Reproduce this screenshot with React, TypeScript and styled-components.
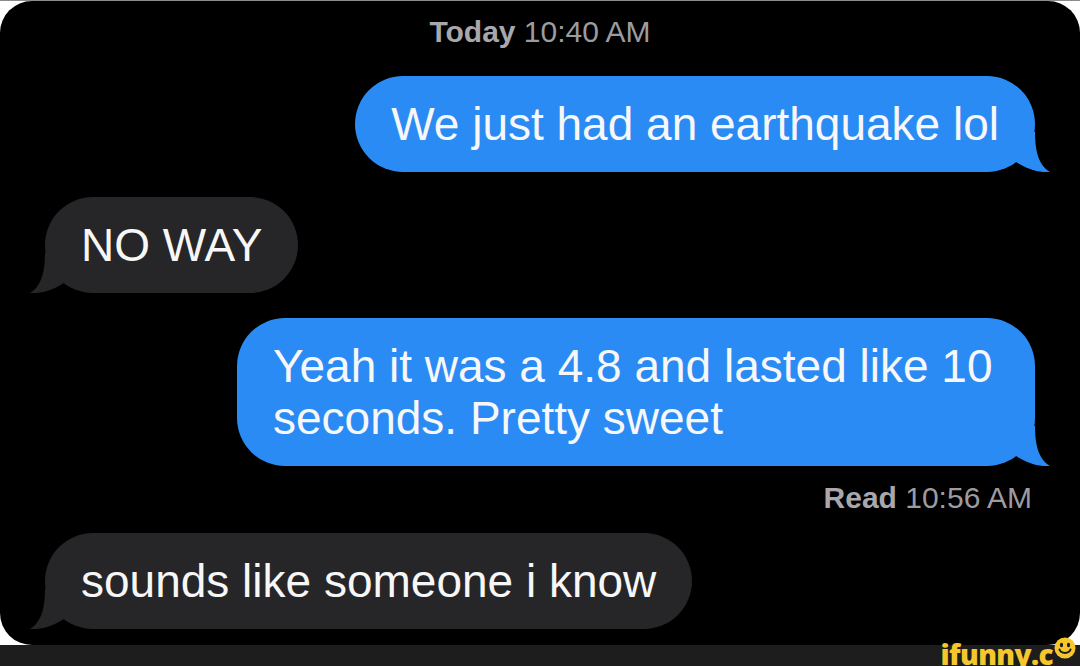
import React from "react";
import styled, { createGlobalStyle } from "styled-components";

const Global = createGlobalStyle`
  html, body {
    margin: 0;
    padding: 0;
    background: #ffffff;
    overflow: hidden;
    width: 1080px;
    height: 666px;
  }
  #root {
    width: 1080px;
    height: 666px;
  }
`;

const Page = styled.div`
  width: 1080px;
  height: 666px;
  display: flex;
  flex-direction: column;
  background: #ffffff;
  border-top: 1px solid #8c8c8c;
  box-sizing: border-box;
  font-family: "Liberation Sans", Arial, sans-serif;
`;

const Card = styled.div`
  height: 644px;
  background: #000000;
  border-radius: 32px;
  display: flex;
  flex-direction: column;
  padding: 0 45px;
  box-sizing: border-box;
`;

const Stamp = styled.div<{ $align: "center" | "right"; $mt: number }>`
  margin-top: ${(p) => p.$mt}px;
  text-align: ${(p) => p.$align};
  padding-right: ${(p) => (p.$align === "right" ? 3 : 0)}px;
  font-size: 30px;
  line-height: 34px;
  color: #9c9ca0;
  b {
    font-weight: 700;
    color: #a8a8ac;
  }
`;

const Row = styled.div<{ $out: boolean; $mt: number }>`
  display: flex;
  justify-content: ${(p) => (p.$out ? "flex-end" : "flex-start")};
  margin-top: ${(p) => p.$mt}px;
`;

const Bubble = styled.div<{ $out: boolean; $max?: number }>`
  position: relative;
  box-sizing: border-box;
  max-width: ${(p) => (p.$max ? `${p.$max}px` : "none")};
  padding: 22px 36px;
  border-radius: 48px;
  background: ${(p) => (p.$out ? "#2b8bf4" : "#262629")};
  color: #f7f7f7;
  font-size: 46px;
  line-height: 52px;
`;

const Tail = styled.svg<{ $out: boolean }>`
  position: absolute;
  bottom: 0;
  width: 36px;
  height: 40px;
  ${(p) =>
    p.$out
      ? "right: -16px;"
      : "left: -16px; transform: scaleX(-1);"}
`;

const Footer = styled.div`
  position: relative;
  flex: 1;
  background: #1d1d1d;
`;

const Logo = styled.div`
  position: absolute;
  right: 4px;
  bottom: -3px;
  display: flex;
  align-items: flex-start;
  font-family: "Open Sans", "Liberation Sans", sans-serif;
  font-weight: 800;
  font-size: 28px;
  line-height: 30px;
  letter-spacing: -0.6px;
  color: #f6c72d;
`;

const Smiley = styled.svg`
  width: 22px;
  height: 22px;
  margin-left: 1px;
  margin-top: -2px;
`;

function BubbleTail({ out }: { out: boolean }) {
  return (
    <Tail $out={out} viewBox="0 0 36 40">
      <path
        d="M0 0 H20 C20 22 25 34 35 40 C24 41 12 37 1 30 Z"
        fill={out ? "#2b8bf4" : "#262629"}
      />
    </Tail>
  );
}

function Message({
  out,
  mt,
  max,
  children,
}: {
  out: boolean;
  mt: number;
  max?: number;
  children: React.ReactNode;
}) {
  return (
    <Row $out={out} $mt={mt}>
      <Bubble $out={out} $max={max}>
        {children}
        <BubbleTail out={out} />
      </Bubble>
    </Row>
  );
}

export default function App() {
  return (
    <>
      <Global />
      <Page>
        <Card>
          <Stamp $align="center" $mt={14}>
            <b>Today</b> 10:40 AM
          </Stamp>
          <Message out mt={27}>
            We just had an earthquake lol
          </Message>
          <Message out={false} mt={25}>
            NO WAY
          </Message>
          <Message out mt={25} max={798}>
            Yeah it was a 4.8 and lasted like 10 seconds. Pretty sweet
          </Message>
          <Stamp $align="right" $mt={15}>
            <b>Read</b> 10:56 AM
          </Stamp>
          <Message out={false} mt={18}>
            sounds like someone i know
          </Message>
        </Card>
        <Footer>
          <Logo>
            ifunny.c
            <Smiley viewBox="0 0 22 22">
              <circle cx="11" cy="11" r="10.5" fill="#f6c72d" />
              <ellipse cx="7.5" cy="8" rx="1.6" ry="2.2" fill="#1d1d1d" />
              <ellipse cx="14.5" cy="8" rx="1.6" ry="2.2" fill="#1d1d1d" />
              <path
                d="M5.5 12.5 C7 17 15 17 16.5 12.5"
                fill="none"
                stroke="#1d1d1d"
                strokeWidth="2"
                strokeLinecap="round"
              />
            </Smiley>
          </Logo>
        </Footer>
      </Page>
    </>
  );
}
